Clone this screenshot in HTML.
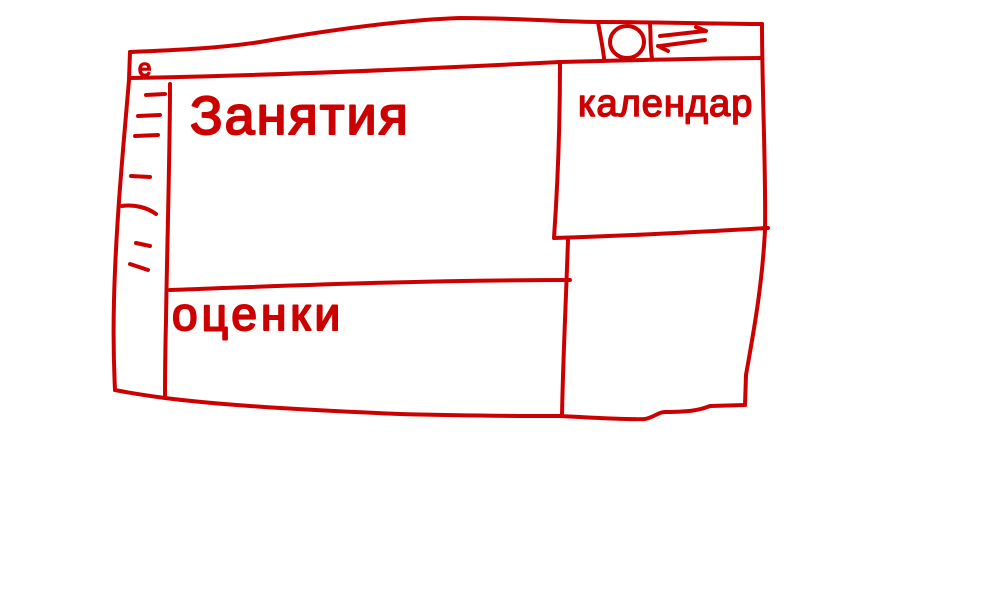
<!DOCTYPE html>
<html>
<head>
<meta charset="utf-8">
<style>
html,body{margin:0;padding:0;background:#fff;width:1000px;height:600px;overflow:hidden}
svg{display:block}
text{font-family:"Liberation Sans","DejaVu Sans",sans-serif;fill:#cc0000}
</style>
</head>
<body>
<svg width="1000" height="600" viewBox="0 0 1000 600" fill="none" stroke="#cc0000" stroke-width="4" stroke-linecap="round" stroke-linejoin="round">
  <path d="M130,52 C180,50 220,48 260,42 C330,30 400,20 460,18 C520,18 560,22 600,22 C660,22 720,24 762,24"/>
  <path d="M130,52 L129,80 C124,140 116,220 114,300 C113,340 114,370 115,390"/>
  <path d="M130,78 C250,76 400,70 560,62 C640,60 720,58 762,58"/>
  <path d="M762,24 C762,90 766,170 765,230 C762,290 752,340 746,375 L745,405"/>
  <path d="M115,390 C130,393 150,396 165,398 C220,405 300,410 400,414 C470,416 520,416 560,416 C600,418 630,420 645,419 C655,417 658,412 665,412 C690,412 700,410 710,406 L745,405"/>
  <path d="M170,84 C170,150 167,250 166,320 C165,360 165,380 165,396"/>
  <path d="M560,62 C560,120 558,180 554,238"/>
  <path d="M568,240 C566,300 563,360 562,415"/>
  <path d="M554,238 C620,236 700,232 768,228"/>
  <path d="M170,290 C280,286 420,280 570,280"/>
  <path d="M598,22 C600,34 603,48 604,58"/>
  <path d="M650,24 C651,36 650,48 652,58"/>
  <ellipse cx="627" cy="42" rx="17" ry="16"/>
  <path d="M660,36 L705,31 M696,27 L706,31"/>
  <path d="M705,40 L660,46 M668,51 L658,46"/>
  <path d="M146,95 L165,94"/>
  <path d="M138,116 L160,115"/>
  <path d="M135,136 L158,135"/>
  <path d="M131,176 L150,177"/>
  <path d="M122,206 C135,204 148,208 156,214"/>
  <path d="M136,243 L150,246"/>
  <path d="M130,264 L148,270"/>
  <text x="138" y="76" font-size="24" stroke="#cc0000" stroke-width="1.5">e</text>
  <text x="190" y="134" font-size="54" stroke="#cc0000" stroke-width="2" letter-spacing="2">Занятия</text>
  <text x="578" y="116" font-size="38" stroke="#cc0000" stroke-width="1.5" letter-spacing="1">календар</text>
  <text x="172" y="330" font-size="46" stroke="#cc0000" stroke-width="2" letter-spacing="4">оценки</text>
</svg>
</body>
</html>
